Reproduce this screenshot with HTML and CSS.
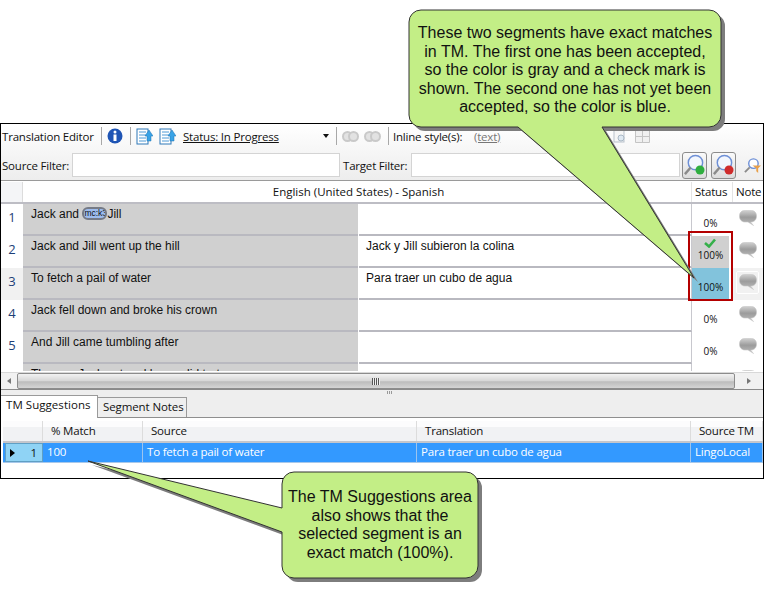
FILE: index.html
```html
<!DOCTYPE html>
<html lang="en">
<head>
  <meta charset="UTF-8" />
  <title>Translation Editor</title>
  <link rel="stylesheet" href="styles.css">
</head>
<body>
  <svg class="defs" width="0" height="0">
    <defs>
      <linearGradient id="bubble-fill" x1="0" y1="0" x2="0" y2="1">
        <stop offset="0" stop-color="#d0d0d0" />
        <stop offset="0.45" stop-color="#9c9c9c" />
        <stop offset="0.8" stop-color="#b0b0b0" />
        <stop offset="1" stop-color="#d4d4d4" />
      </linearGradient>
      <symbol id="note" viewBox="0 0 18 16">
        <path d="M6 .5h6c3.500 0 5.500 2 5.500 5.500S15.500 12 12 12h-.5l3 3.500L9 12H6C2.500 12 .5 9.500 .5 6S2.500 .5 6 .5z" fill="url(#bubble-fill)" stroke="#c6c6c6" stroke-width=".6" />
      </symbol>
      <symbol id="doc" viewBox="0 0 17 17">
        <rect x="1" y="1" width="11" height="15" fill="#fff" stroke="#2f78b8" />
        <path d="M3 4h7M3 7h7M3 10h7M3 13h7" stroke="#4f9ad6" />
        <path d="M9 8l4-6 4 6h-2v5h-4V8z" fill="#39a3e6" stroke="#1f72b2" stroke-width=".5" />
      </symbol>
      <symbol id="lens" viewBox="0 0 24 24">
        <circle cx="13" cy="9" r="7.500" fill="#f2f6fd" stroke="#6d8fd6" stroke-width="1.500" />
        <path d="M8 14l-6 7" stroke="#8a8a8a" stroke-width="2.500" />
      </symbol>
    </defs>
  </svg>

  <div class="window">
    <div class="toolbar">
      <div class="tool-row">
        <span class="tool-title">Translation Editor</span>
        <i class="sep"></i>
        <svg class="ico-info" viewBox="0 0 16 16">
          <circle cx="8" cy="8" r="7.500" fill="#1f55b5" />
          <circle cx="8" cy="4" r="1.500" fill="#fff" />
          <rect x="6.500" y="6.500" width="3" height="6.500" fill="#fff" />
        </svg>
        <i class="sep sep-b"></i>
        <svg class="ico-doc"><use href="#doc" /></svg>
        <svg class="ico-doc doc-two"><use href="#doc" /></svg>
        <a class="status-link">Status: In Progress</a>
        <span class="drop-arrow"></span>
        <i class="sep sep-c"></i>
        <span class="rings"><b></b><b></b></span>
        <span class="rings"><b></b><b></b></span>
        <i class="sep sep-d"></i>
        <span class="inline-label">Inline style(s):</span>
        <a class="inline-link">(text)</a>
        <svg class="ico-page" viewBox="0 0 14 16">
          <rect x="1" y="1" width="10" height="13" fill="#f6f6f6" stroke="#b9c2cc" />
          <circle cx="8" cy="10" r="3" fill="#dfe9f2" stroke="#a9b7c4" />
        </svg>
        <svg class="ico-table" viewBox="0 0 15 13">
          <path d="M.5.5h14v12H.5zM.5 6.500h14M7.500.5v12" fill="#f0f0f0" stroke="#c4c4c4" />
        </svg>
      </div>
      <div class="tool-row filter-row">
        <label class="source-label">Source Filter:</label>
        <input class="filter source-filter" type="text" />
        <label class="target-label">Target Filter:</label>
        <input class="filter target-filter" type="text" />
        <button class="lens-btn">
          <svg><use href="#lens" /><circle cx="17" cy="17" r="4.500" fill="#2fae3f" /></svg>
        </button>
        <button class="lens-btn">
          <svg><use href="#lens" /><circle cx="17" cy="17" r="4.500" fill="#cf2b2b" /></svg>
        </button>
        <svg class="ico-clear" viewBox="0 0 18 18">
          <circle cx="10" cy="7" r="5" fill="#fff" stroke="#6d8fd6" stroke-width="1.500" />
          <path d="M6 11l-5 5" stroke="#8a8a8a" stroke-width="2" />
          <path d="M9 9h9l-3 3v5l-2-2v-3z" fill="#e8a04a" />
        </svg>
      </div>
    </div>

    <div class="seg-head">
      <div class="corner"></div>
      <div class="head-main">English (United States) - Spanish</div>
      <div class="head-status">Status</div>
      <div class="head-note">Note</div>
    </div>

    <div class="seg-rows">
      <div class="seg-row">
        <div class="num">1</div>
        <div class="src">Jack and <span class="tag">mc:k3</span>Jill</div>
        <div class="tgt"></div>
        <div class="stat"><span class="pct">0%</span></div>
        <div class="note"><svg class="bubble"><use href="#note" /></svg></div>
      </div>
      <div class="seg-row">
        <div class="num">2</div>
        <div class="src">Jack and Jill went up the hill</div>
        <div class="tgt">Jack y Jill subieron la colina</div>
        <div class="stat gray">
          <svg class="check" viewBox="0 0 12 10"><path d="M1 5l4 3.500L11 1.500" fill="none" stroke="#35b04a" stroke-width="2.600" /></svg>
          <span class="pct">100%</span>
        </div>
        <div class="note"><svg class="bubble"><use href="#note" /></svg></div>
      </div>
      <div class="seg-row current">
        <div class="num">3</div>
        <div class="src">To fetch a pail of water</div>
        <div class="tgt">Para traer un cubo de agua</div>
        <div class="stat blue"><span class="pct">100%</span></div>
        <div class="note"><span class="note-hover"><svg class="bubble"><use href="#note" /></svg></span></div>
      </div>
      <div class="seg-row">
        <div class="num">4</div>
        <div class="src">Jack fell down and broke his crown</div>
        <div class="tgt"></div>
        <div class="stat"><span class="pct">0%</span></div>
        <div class="note"><svg class="bubble"><use href="#note" /></svg></div>
      </div>
      <div class="seg-row">
        <div class="num">5</div>
        <div class="src">And Jill came tumbling after</div>
        <div class="tgt"></div>
        <div class="stat"><span class="pct">0%</span></div>
        <div class="note"><svg class="bubble"><use href="#note" /></svg></div>
      </div>
      <div class="seg-row">
        <div class="num"></div>
        <div class="src">Then up Jack got and home did trot</div>
        <div class="tgt"></div>
        <div class="stat"></div>
        <div class="note"><svg class="bubble"><use href="#note" /></svg></div>
      </div>
    </div>

    <div class="hscroll">
      <span class="arrow-left"></span>
      <div class="thumb"><span class="grip"></span></div>
      <span class="arrow-right"></span>
    </div>

    <div class="tabs">
      <span class="split-grip"></span>
      <div class="tab active">TM Suggestions</div>
      <div class="tab">Segment Notes</div>
    </div>

    <div class="tm-grid">
      <div class="tm-head">
        <div class="c-corner"></div>
        <div class="c-match">% Match</div>
        <div class="c-source">Source</div>
        <div class="c-trans">Translation</div>
        <div class="c-tm">Source TM</div>
      </div>
      <div class="tm-row">
        <div class="c-corner row-head"><span class="row-arrow"></span><span>1</span></div>
        <div class="c-match">100</div>
        <div class="c-source">To fetch a pail of water</div>
        <div class="c-trans">Para traer un cubo de agua</div>
        <div class="c-tm">LingoLocal</div>
      </div>
    </div>
  </div>

  <div class="red-box"></div>

  <svg class="overlay" viewBox="0 0 764 593">
    <g class="shadow" transform="translate(4 4)">
      <path d="M421 10H709a12 12 0 0 1 12 12V115a12 12 0 0 1-12 12H602L694 278 518 127H421a12 12 0 0 1-12-12V22a12 12 0 0 1 12-12z" />
      <path d="M294 472H466a12 12 0 0 1 12 12V566a12 12 0 0 1-12 12H294a12 12 0 0 1-12-12V532L88 461 282 508V484a12 12 0 0 1 12-12z" />
    </g>
    <g class="balloon">
      <path d="M421 10H709a12 12 0 0 1 12 12V115a12 12 0 0 1-12 12H602L694 278 518 127H421a12 12 0 0 1-12-12V22a12 12 0 0 1 12-12z" />
      <path d="M294 472H466a12 12 0 0 1 12 12V566a12 12 0 0 1-12 12H294a12 12 0 0 1-12-12V532L88 461 282 508V484a12 12 0 0 1 12-12z" />
    </g>
  </svg>

  <div class="callout callout-top">These two segments have exact matches in TM. The first one has been accepted, so the color is gray and a check mark is shown. The second one has not yet been accepted, so the color is blue.</div>
  <div class="callout callout-bottom">The TM Suggestions area also shows that the selected segment is an exact match (100%).</div>
</body>
</html>
```

FILE: styles.css
```css
* {
  box-sizing: border-box;
}
html, body {
  margin: 0;
  padding: 0;
}
body {
  position: relative;
  width: 764px;
  height: 593px;
  padding-top: 123px;
  overflow: hidden;
  background: #fff;
  color: #111;
  font-family: "Open Sans", "Noto Sans", sans-serif;
  font-size: 11.500px;
  letter-spacing: -0.2px;
}
.defs {
  position: absolute;
}
.window {
  height: 356px;
  border: 1px solid #000;
  display: flex;
  flex-direction: column;
  overflow: hidden;
}

/* toolbar */
.toolbar {
  height: 57px;
  border-bottom: 1px solid #9a9a9a;
  background: linear-gradient(#fff, #ededed);
  flex: none;
}
.tool-row {
  display: flex;
  align-items: center;
  height: 24px;
  padding-left: 1px;
  white-space: nowrap;
}
.tool-title {
  width: 99px;
}
.sep {
  width: 1px;
  height: 18px;
  background: #a8a8a8;
  flex: none;
}
.ico-info {
  width: 16px;
  height: 16px;
  margin: 0 7px 0 5px;
}
.ico-doc {
  width: 17px;
  height: 17px;
  margin-left: 5px;
}
.doc-two {
  margin-left: 6px;
}
.status-link {
  margin-left: 7px;
  width: 97px;
  text-decoration: underline;
}
.drop-arrow {
  margin-left: 43px;
  border: 3px solid transparent;
  border-top: 4px solid #111;
  border-bottom: 0;
}
.sep-c {
  margin-left: 7px;
}
.rings {
  display: flex;
  margin-left: 5px;
  width: 17px;
}
.rings b {
  width: 11px;
  height: 11px;
  border-radius: 50%;
  border: 2px solid #c9c9c9;
  background: #e2e2e2;
}
.rings b + b {
  margin-left: -5px;
}
.sep-d {
  margin-left: 7px;
}
.inline-label {
  margin-left: 4px;
  width: 81px;
}
.inline-link {
  width: 27px;
  color: #777;
  text-decoration: underline;
}
.ico-page {
  width: 14px;
  height: 16px;
  margin-left: 112px;
}
.ico-table {
  width: 15px;
  height: 13px;
  margin-left: 8px;
}
.filter-row {
  height: 32px;
  padding-top: 2px;
}
.source-label {
  width: 70px;
}
.filter {
  height: 24px;
  border: 1px solid #d4d4d4;
  background: #fff;
  padding: 0;
}
.source-filter {
  width: 268px;
}
.target-label {
  width: 68px;
  margin-left: 3px;
}
.target-filter {
  width: 269px;
}
.lens-btn {
  width: 25px;
  height: 27px;
  margin-left: 2px;
  padding: 0;
  border: 1px solid #8c8c8c;
  border-radius: 3px;
  background: linear-gradient(#fafafa, #dcdcdc);
}
.lens-btn + .lens-btn {
  margin-left: 4px;
}
.lens-btn svg {
  display: block;
  width: 23px;
  height: 25px;
}
.ico-clear {
  width: 17px;
  height: 17px;
  margin-left: 8px;
}

/* segment grid */
.seg-head {
  display: grid;
  grid-template-columns: 22px 669px 41px 30px;
  height: 22px;
  margin-top: 1px;
  flex: none;
  border-bottom: 2px solid #bdbdc4;
  line-height: 19px;
  background: #fff;
}
.corner {
  background: #f4f5f7;
  border-right: 1px solid #dcdcdc;
}
.head-main {
  text-align: center;
  padding-left: 3px;
  letter-spacing: 0;
  border-right: 1px solid #e4e4e4;
}
.head-status {
  padding-left: 3px;
  border-right: 1px solid #e4e4e4;
}
.head-note {
  padding-left: 3px;
  overflow: hidden;
}
.seg-rows {
  height: 167px;
  overflow: hidden;
  flex: none;
}
.seg-row {
  display: grid;
  grid-template-columns: 22px 335px 334px 41px 30px;
  height: 32px;
  font-family: "Liberation Sans", Arial, sans-serif;
  font-size: 12px;
  letter-spacing: 0;
}
.num {
  padding-top: 4px;
  text-align: center;
  font-family: "Open Sans", sans-serif;
  font-size: 13px;
  color: #1d3f78;
}
.src {
  padding: 3px 0 0 8px;
  background: #d0d0d0;
  border-bottom: 2px solid #b9b9c0;
}
.tgt {
  padding: 3px 0 0 7px;
  margin-left: 1px;
  border-bottom: 2px solid #b9b9c0;
  border-right: 1px solid #c8c8ce;
}
.tag {
  display: inline-block;
  width: 25px;
  height: 13px;
  border: 2px solid #757a86;
  border-radius: 6px;
  background: #9dbcee;
  font-size: 8.500px;
  line-height: 9px;
  text-align: center;
  vertical-align: -2px;
  overflow: hidden;
}
.stat {
  position: relative;
  margin: 0 4px 0 0;
  text-align: center;
  font-family: "Open Sans", sans-serif;
  font-size: 10px;
}
.pct {
  position: absolute;
  left: 0;
  right: 0;
  top: 12px;
}
.gray {
  background: #d0d0d0;
}
.blue {
  background: #82c3dc;
}
.check {
  position: absolute;
  left: 12px;
  top: 2px;
  width: 12px;
  height: 10px;
}
.note {
  padding: 6px 0 0 6px;
}
.bubble {
  display: block;
  width: 18px;
  height: 16px;
}
.current .num {
  background: #f1f1f1;
}
.current .note {
  background: #f1f1f1;
  padding: 3px 0 0 3px;
}
.note-hover {
  display: block;
  width: 23px;
  height: 23px;
  padding: 2px 0 0 2px;
  border: 1px solid #fff;
  border-radius: 2px;
}

/* scroll bar */
.hscroll {
  display: flex;
  align-items: center;
  height: 18px;
  margin-top: 1px;
  flex: none;
  background: #f1f1f1;
  border-top: 1px solid #d8d8d8;
  border-bottom: 1px solid #8a8a8a;
}
.arrow-left {
  margin: 0 6px 0 6px;
  border: 3px solid transparent;
  border-right: 4px solid #777;
  border-left: 0;
}
.thumb {
  display: flex;
  justify-content: center;
  align-items: center;
  width: 718px;
  height: 16px;
  border: 1px solid #8c8c8c;
  border-radius: 2px;
  background: linear-gradient(#f2f2f2, #d6d6d6 50%, #bcbcbc 55%, #d4d4d4);
}
.grip {
  width: 8px;
  height: 7px;
  background: repeating-linear-gradient(90deg, #555 0 1px, #eee 1px 2px);
}
.arrow-right {
  margin-left: 12px;
  border: 3px solid transparent;
  border-left: 4px solid #777;
  border-right: 0;
}

/* tabs */
.tabs {
  position: relative;
  display: flex;
  align-items: flex-end;
  height: 28px;
  flex: none;
  background: #eee;
  border-bottom: 1px solid #8e8e8e;
}
.split-grip {
  position: absolute;
  left: 386px;
  top: 1px;
  width: 5px;
  height: 3px;
  background: repeating-linear-gradient(90deg, #999 0 1px, #eee 1px 2px);
}
.tab {
  height: 20px;
  width: 89px;
  padding-left: 5px;
  line-height: 18px;
  letter-spacing: -0.1px;
  background: #efefef;
  border: 1px solid #9a9a9a;
  border-bottom: 0;
  border-left: 0;
  white-space: nowrap;
}
.tab.active {
  width: 97px;
  height: 23px;
  margin-bottom: -1px;
  padding-left: 5px;
  letter-spacing: 0.05px;
  background: #fff;
}

/* tm grid */
.tm-grid {
  flex: 1;
  padding: 3px 0 0 2px;
  background: #fff;
}
.tm-head,
.tm-row {
  display: grid;
  grid-template-columns: 40px 100px 274px 274px 72px;
}
.tm-head {
  height: 22px;
  line-height: 20px;
  background: linear-gradient(#fcfcfd 30%, #f1f2f4 30%);
  border-bottom: 2px solid #c4c6cc;
}
.tm-head > div {
  border-right: 1px solid #dcdcdc;
  padding-left: 8px;
}
.tm-row {
  height: 20px;
  line-height: 18px;
  background: #3399ff;
  color: #fff;
  border-bottom: 1px solid #a8c8ea;
}
.tm-row > div {
  border-right: 1px solid #9cc4ee;
  padding-left: 4px;
  overflow: hidden;
  white-space: nowrap;
}
.tm-row .row-head {
  display: flex;
  justify-content: space-between;
  align-items: center;
  margin-left: 2px;
  padding: 0 5px 0 4px;
  background: #8fd3f5;
  color: #111;
  border: 1px solid #5f9fc4;
}
.row-arrow {
  border: 4px solid transparent;
  border-left: 5px solid #000;
  border-right: 0;
}

/* callouts */
.red-box {
  position: absolute;
  left: 688px;
  top: 231px;
  width: 45px;
  height: 70px;
  border: 2px solid #b40000;
}
.overlay {
  position: absolute;
  left: 0;
  top: 0;
  width: 764px;
  height: 593px;
}
.shadow path {
  fill: #7d7d7d;
}
.balloon path {
  fill: #c3ee86;
  stroke: #333;
  stroke-width: 1;
}
.callout {
  position: absolute;
  text-align: center;
  font-family: "Liberation Sans", Arial, sans-serif;
  font-size: 16px;
  letter-spacing: 0;
  line-height: 18.500px;
  color: #111;
}
.callout-top {
  left: 414px;
  top: 24px;
  width: 302px;
}
.callout-bottom {
  left: 286px;
  top: 488px;
  width: 188px;
}
```
